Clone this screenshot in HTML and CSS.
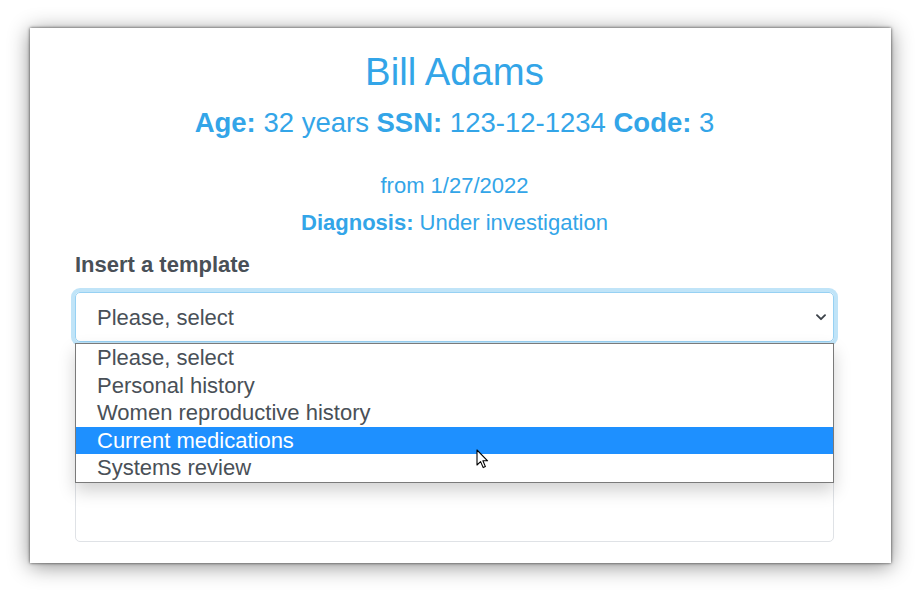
FILE: index.html
```html
<!DOCTYPE html>
<html lang="en">
<head>
<meta charset="utf-8">
<title>Bill Adams</title>
<link rel="stylesheet" href="styles.css">
</head>
<body>
<div class="window">
  <h1 class="name">Bill Adams</h1>
  <h3 class="ident"><b>Age:</b> 32 years <b>SSN:</b> 123-12-1234 <b>Code:</b> 3</h3>
  <p class="from">from 1/27/2022</p>
  <p class="diag"><b>Diagnosis:</b> Under investigation</p>
  <label class="label">Insert a template</label>
  <div class="select-wrap">
    <div class="select">
      <span>Please, select</span>
      <svg class="chev" width="10" height="7" viewBox="0 0 10 7"><path d="M1 1.2 L5 5.2 L9 1.2" fill="none" stroke="#3d434a" stroke-width="1.9" stroke-linecap="round" stroke-linejoin="round"/></svg>
    </div>
    <div class="listbox">
      <div class="opt">Please, select</div>
      <div class="opt">Personal history</div>
      <div class="opt">Women reproductive history</div>
      <div class="opt sel">Current medications</div>
      <div class="opt">Systems review</div>
    </div>
    <svg class="cursor" width="13" height="20" viewBox="0 0 13 20"><path d="M1 1 L1 16 L4.6 12.6 L7.2 18.6 L9.4 17.6 L6.9 11.8 L11.6 11.8 Z" fill="#fff" stroke="#000" stroke-width="1.1" stroke-linejoin="round"/></svg>
  </div>
  <div class="textbox"></div>
</div>
</body>
</html>
```

FILE: styles.css
```css
html, body {
  margin: 0;
  padding: 0;
  background: #ffffff;
}
body {
  font-family: "Liberation Sans", Arial, sans-serif;
  color: #495057;
  padding-bottom: 32px;
}
.window {
  margin: 28px 0 0 30px;
  width: 861px;
  height: 535px;
  box-sizing: border-box;
  padding: 21px 57px 0 45px;
  background: #fff;
  box-shadow: 0 0 3px rgba(0,0,0,0.7), 0 3px 20px rgba(0,0,0,0.45);
  display: flex;
  flex-direction: column;
}
.name {
  margin: 0;
  text-align: center;
  font-weight: 400;
  font-size: 38.3px;
  line-height: 45px;
  color: #33a5e8;
}
.ident {
  margin: 12px 0 0;
  text-align: center;
  font-weight: 400;
  font-size: 27.5px;
  line-height: 34px;
  color: #33a5e8;
}
.from {
  margin: 28.5px 0 0;
  text-align: center;
  font-size: 22px;
  line-height: 33px;
  color: #33a5e8;
}
.diag {
  margin: 5.5px 0 0;
  text-align: center;
  font-size: 22px;
  line-height: 31px;
  color: #33a5e8;
}
.label {
  margin: 11px 0 0;
  font-weight: 700;
  font-size: 22px;
  line-height: 32.7px;
  color: #495057;
}
.select-wrap {
  position: relative;
  margin-top: 10.3px;
}
.select {
  height: 50px;
  box-sizing: border-box;
  border: 1px solid #97d1f3;
  border-radius: 5px;
  box-shadow: 0 0 0 4px rgba(47,164,231,0.3);
  display: flex;
  align-items: center;
  justify-content: space-between;
  padding: 0 7px 0 21px;
  font-size: 22px;
  color: #495057;
}
.select span {
  position: relative;
  top: 1px;
}
.chev {
  display: block;
}
.listbox {
  position: absolute;
  left: 0;
  right: 0;
  top: 51px;
  z-index: 2;
  background: #fff;
  border: 1px solid #7a7a7a;
  box-shadow: 0 8px 16px rgba(0,0,0,0.18);
}
.opt {
  height: 27.5px;
  line-height: 27.5px;
  padding-left: 21px;
  font-size: 22px;
  color: #495057;
}
.opt.sel {
  background: #1e90ff;
  color: #ffffff;
}
.cursor {
  position: absolute;
  left: 401px;
  top: 157px;
  z-index: 3;
}
.textbox {
  margin-top: 16px;
  height: 182px;
  border: 1px solid #dfe2e6;
  border-radius: 5px;
}
```
